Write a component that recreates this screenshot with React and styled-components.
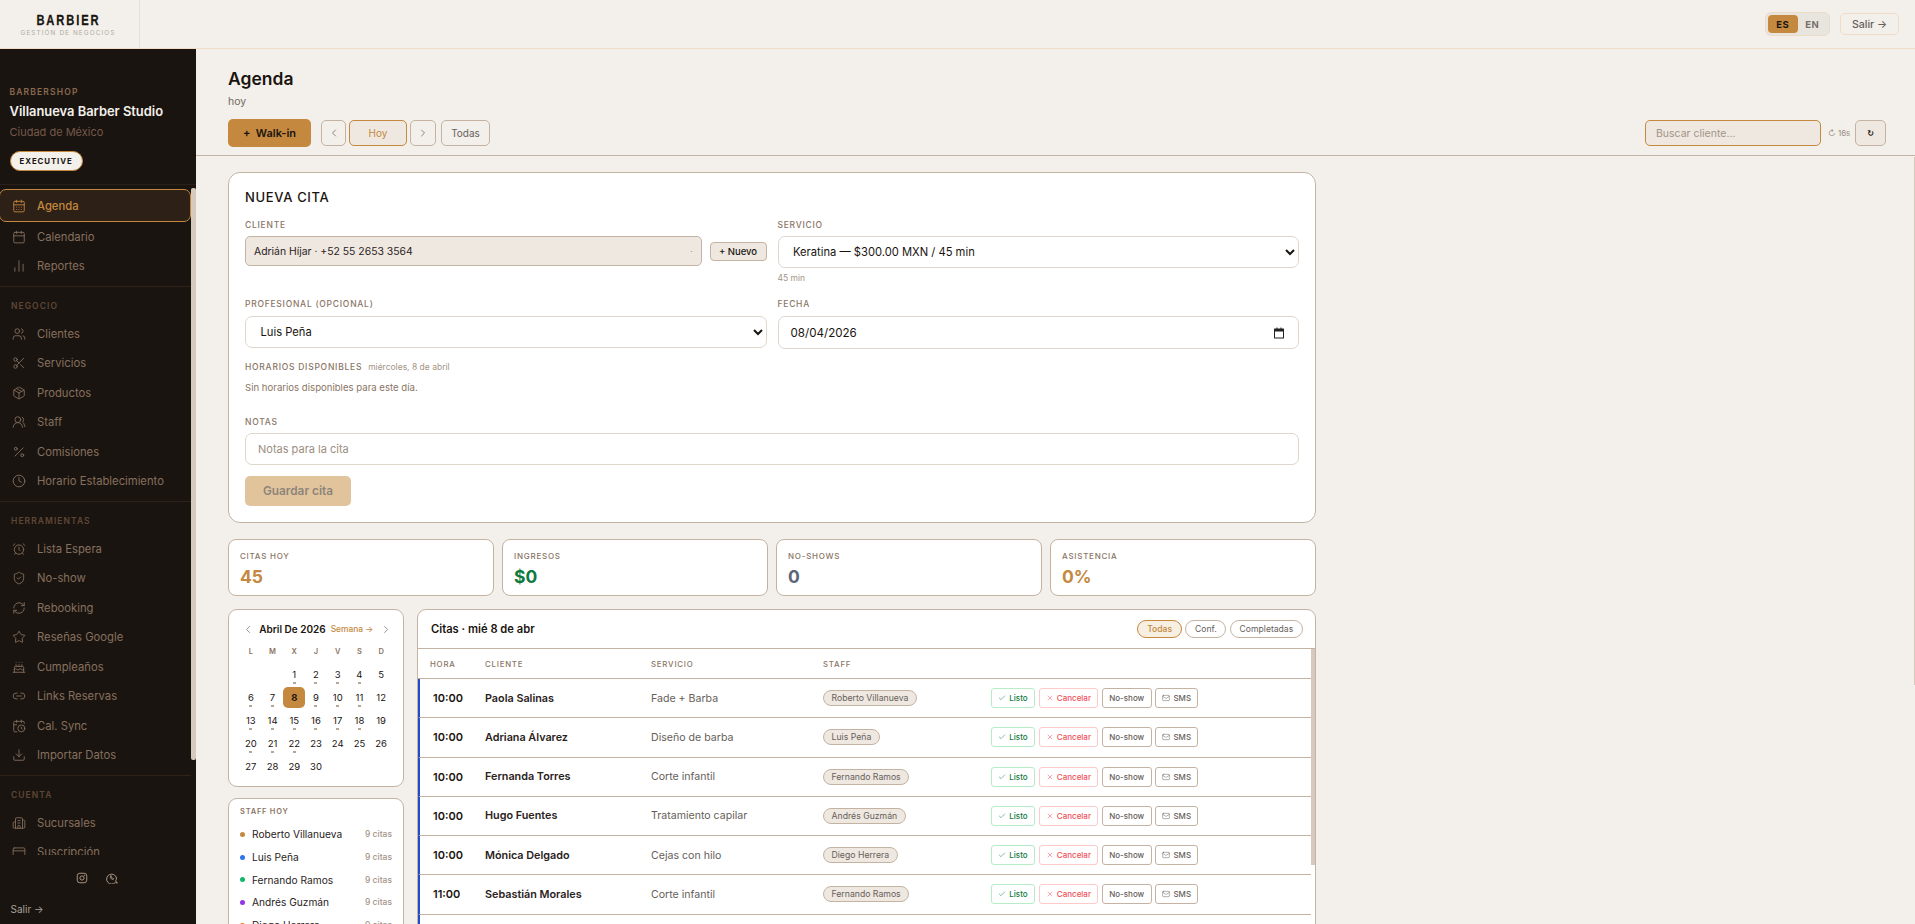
import styled, { createGlobalStyle } from "styled-components";
import {
  AlarmClock, Building2, Cake, CalendarClock, CalendarDays, Calendar, ChartNoAxesColumn, Check,
  ChevronLeft, ChevronRight, Clock, CreditCard, Download, Link2, Mail, Package, Percent,
  RefreshCw, Scissors, ShieldCheck, Star, Users, UsersRound, X,
} from "lucide-react";

const gold = "#c4883f";
const line = "#c4b3a3";
const soft = "#efe8e1";
const ink = "#1a1410";
const muted = "#8a7565";

const GlobalStyle = createGlobalStyle`
  html, body { margin: 0; padding: 0; height: 100%; overflow: hidden; }
  body { background: #f3f0eb; font-family: Inter, "Liberation Sans", sans-serif; color: ${ink}; }
  * { box-sizing: border-box; }
`;

const Page = styled.div`
  height: 100vh;
  display: flex;
  flex-direction: column;
  overflow: hidden;
`;

const TopBar = styled.header`
  height: 49px;
  flex: none;
  display: flex;
  align-items: center;
  justify-content: space-between;
  border-bottom: 1px solid #f0dcc4;
  padding-right: 16px;
`;

const LogoBlock = styled.div`
  width: 140px;
  height: 48px;
  padding-right: 3px;
  border-right: 1px solid #e8dfd5;
  display: flex;
  flex-direction: column;
  align-items: center;
  justify-content: center;
`;

const LogoName = styled.div`
  font-family: "Liberation Sans", sans-serif;
  font-weight: 700;
  font-size: 15.5px;
  line-height: 16px;
  letter-spacing: 2.6px;
  color: ${ink};
  transform: scaleX(0.72);
  -webkit-text-stroke: 0.3px ${ink};
`;

const LogoSub = styled.div`
  margin-top: 1px;
  font-size: 6.4px;
  line-height: 8px;
  letter-spacing: 1.1px;
  color: #b0aaa2;
`;

const TopActions = styled.div`
  display: flex;
  align-items: center;
  gap: 10px;
`;

const LangSwitch = styled.div`
  display: flex;
  width: 65px;
  height: 24px;
  padding: 2px;
  background: #e8e4de;
  border: 1px solid #eddcc8;
  border-radius: 6px;
`;

const LangOption = styled.span`
  flex: 1;
  display: flex;
  align-items: center;
  justify-content: center;
  font-size: 9.5px;
  font-weight: 700;
  letter-spacing: 0.4px;
  border-radius: 4px;
  background: ${(p) => (p.$active ? gold : "transparent")};
  color: ${(p) => (p.$active ? ink : "#77706a")};
`;

const ExitButton = styled.button`
  width: 59px;
  height: 22px;
  background: transparent;
  border: 1px solid #f0dcc4;
  border-radius: 5px;
  font: 500 10.6px Inter, sans-serif;
  color: #66605a;
  padding: 0;
`;

const Body = styled.div`
  flex: 1;
  display: flex;
  min-height: 0;
`;

const Sidebar = styled.aside`
  width: 196px;
  flex: none;
  background: ${ink};
  display: flex;
  flex-direction: column;
`;

const Shop = styled.div`
  padding: 37px 9.5px 13px;
  border-bottom: 1px solid #2b2018;
`;

const ShopKicker = styled.div`
  font-size: 8.5px;
  line-height: 12px;
  font-weight: 600;
  letter-spacing: 1.15px;
  color: #8a6a50;
`;

const ShopName = styled.div`
  margin-top: 5px;
  font-size: 12.9px;
  line-height: 18px;
  font-weight: 600;
  color: #f3f0eb;
`;

const ShopCity = styled.div`
  margin-top: 4px;
  font-size: 11px;
  line-height: 15px;
  color: #75594a;
`;

const PlanBadge = styled.span`
  display: inline-flex;
  align-items: center;
  margin-top: 11px;
  height: 20px;
  padding: 0 9px;
  background: #f3f0eb;
  border: 1px solid ${gold};
  border-radius: 10px;
  font-size: 7.8px;
  font-weight: 700;
  letter-spacing: 0.95px;
  color: ${ink};
`;

const NavWrap = styled.div`
  position: relative;
  flex: 1;
  min-height: 0;
`;

const Nav = styled.nav`
  height: 100%;
  overflow: hidden;
  padding: 4px 5px 0 0;
`;

const SideThumb = styled.div`
  position: absolute;
  top: 3px;
  right: 0.5px;
  width: 4.5px;
  height: 572px;
  background: #d6cabd;
  border-radius: 2px;
`;

const NavItem = styled.a`
  display: flex;
  align-items: center;
  gap: 11px;
  height: ${(p) => (p.$active ? "33px" : "29.5px")};
  margin-left: ${(p) => (p.$active ? "-1px" : "0")};
  padding-left: 12px;
  font-size: 11.25px;
  font-weight: ${(p) => (p.$active ? 500 : 400)};
  color: ${(p) => (p.$active ? gold : "#86705e")};
  background: ${(p) => (p.$active ? "#2d2016" : "transparent")};
  border: ${(p) => (p.$active ? `1px solid ${gold}` : "none")};
  border-radius: ${(p) => (p.$active ? "7px" : "0")};
  svg { flex: none; }
`;

const NavGroup = styled.div`
  padding-bottom: 4.5px;
  border-bottom: 1px solid #2f2218;
`;

const NavTitle = styled.div`
  padding: 13px 11px 7.5px;
  font-size: 8.5px;
  line-height: 12px;
  font-weight: 600;
  letter-spacing: 1.05px;
  color: #5e4636;
`;

const SideFoot = styled.div`
  height: 69px;
  flex: none;
  padding: 17px 10.5px 0;
  background: ${ink};
`;

const SocialRow = styled.div`
  display: flex;
  justify-content: center;
  gap: 18px;
  color: #a8937f;
  padding-right: 2px;
`;

const SideExit = styled.div`
  margin-top: 18px;
  font-size: 10px;
  line-height: 14px;
  color: #a8a29a;
`;

const Main = styled.main`
  position: relative;
  flex: 1;
  min-width: 0;
  overflow: hidden;
`;

const MainThumb = styled.div`
  position: absolute;
  top: 108px;
  right: 0;
  width: 1px;
  height: 528px;
  background: #d6cabd;
`;

const MainHead = styled.div`
  height: 107px;
  padding: 18px 29px 0 32px;
  border-bottom: 1px solid ${line};
`;

const Title = styled.h1`
  margin: 0;
  font-size: 17.5px;
  line-height: 24px;
  font-weight: 600;
  color: ${ink};
`;

const Sub = styled.div`
  margin-top: 4px;
  font-size: 10.5px;
  line-height: 14px;
  color: #6f6860;
`;

const Toolbar = styled.div`
  margin-top: 10px;
  display: flex;
  align-items: center;
`;

const WalkIn = styled.button`
  width: 83px;
  height: 28px;
  margin-right: 10px;
  padding: 0;
  background: ${gold};
  border: none;
  border-radius: 5px;
  font: 600 11px Inter, sans-serif;
  color: ${ink};
`;

const ToolButton = styled.button`
  width: ${(p) => p.$w}px;
  height: 26px;
  margin-right: ${(p) => p.$mr || 3}px;
  padding: 0;
  display: flex;
  align-items: center;
  justify-content: center;
  background: ${(p) => (p.$active ? soft : "transparent")};
  border: 1px solid ${(p) => (p.$active ? gold : line)};
  border-radius: 5px;
  font: 400 10px Inter, sans-serif;
  color: ${(p) => (p.$active ? gold : "#66605a")};
`;

const Push = styled.div`
  flex: 1;
`;

const SearchBox = styled.input`
  width: 176px;
  height: 26px;
  padding: 0 10px;
  background: ${soft};
  border: 1px solid ${gold};
  border-radius: 5px;
  font: 400 10.5px Inter, sans-serif;
  outline: none;
  &::placeholder { color: #a39487; }
`;

const Timer = styled.span`
  margin: 0 6px 0 7px;
  width: 21px;
  font-size: 8px;
  white-space: nowrap;
  color: #9b8d80;
`;

const RefreshButton = styled.button`
  width: 31px;
  height: 26px;
  padding: 0;
  background: ${soft};
  border: 1px solid ${line};
  border-radius: 5px;
  font: 700 8px "DejaVu Sans", sans-serif;
  color: ${ink};
`;

const Content = styled.div`
  width: 1088px;
  margin: 16px 0 0 32px;
`;

const FormCard = styled.section`
  height: 351px;
  padding: 15px 16px 16px;
  background: #fff;
  border: 1px solid ${line};
  border-radius: 12px;
`;

const FormTitle = styled.h2`
  margin: 0;
  font-size: 13px;
  line-height: 18px;
  font-weight: 500;
  letter-spacing: 0.65px;
`;

const FormGrid = styled.div`
  margin-top: ${(p) => p.$top}px;
  display: grid;
  grid-template-columns: 1fr 1fr;
  column-gap: 11px;
`;

const Field = styled.div`
  min-height: ${(p) => p.$min || 0}px;
`;

const FieldLabel = styled.div`
  font-size: 8.5px;
  line-height: 12px;
  margin-bottom: ${(p) => p.$gap || 5}px;
  font-weight: 500;
  letter-spacing: 0.75px;
  color: ${muted};
`;

const ClientRow = styled.div`
  display: flex;
  align-items: center;
  gap: 8px;
`;

const ClientBox = styled.div`
  flex: 1;
  height: 30px;
  display: flex;
  align-items: center;
  justify-content: space-between;
  padding: 0 8px;
  background: ${soft};
  border: 1px solid ${line};
  border-radius: 5px;
  font-size: 10.4px;
  color: #2a221c;
`;

const TinyMark = styled.span`
  font-size: 8px;
  color: #8d8378;
`;

const NewButton = styled.button`
  width: 57px;
  height: 19px;
  padding: 0;
  background: ${soft};
  border: 1px solid ${line};
  border-radius: 4px;
  font: 500 9.5px Inter, sans-serif;
  color: ${ink};
`;

const Select = styled.select`
  width: 100%;
  height: 32px;
  padding: 0 10.5px;
  background: #fff;
  border: 1px solid #e0d6ca;
  border-radius: 7px;
  font: 400 11.2px Inter, sans-serif;
  color: ${ink};
  outline: none;
`;

const Hint = styled.div`
  margin-top: 4px;
  font-size: 8.5px;
  line-height: 12px;
  color: #a39487;
`;

const DateBox = styled.div`
  height: 33px;
  padding: 0 13px 0 12px;
  display: flex;
  align-items: center;
  justify-content: space-between;
  border: 1px solid #e0d6ca;
  border-radius: 7px;
  font-size: 11.6px;
  color: ${ink};
`;

const SlotsHead = styled.div`
  margin-top: 12px;
  display: flex;
  align-items: baseline;
  gap: 6px;
  line-height: 12px;
`;

const SlotsLabel = styled.span`
  font-size: 8.5px;
  font-weight: 500;
  letter-spacing: 0.75px;
  color: ${muted};
`;

const SlotsDate = styled.span`
  font-size: 8.5px;
  color: #a39487;
`;

const SlotsEmpty = styled.div`
  margin-top: 8px;
  font-size: 9.6px;
  line-height: 14px;
  color: ${muted};
`;

const NotesField = styled.div`
  margin-top: 21px;
`;

const NotesInput = styled.input`
  width: 100%;
  height: 32px;
  padding: 0 12px;
  border: 1px solid #e0d6ca;
  border-radius: 7px;
  font: 400 11px Inter, sans-serif;
  outline: none;
  &::placeholder { color: #9b8d80; }
`;

const SaveButton = styled.button`
  display: block;
  width: 106px;
  height: 30px;
  margin-top: 11px;
  padding: 0;
  background: #e2c49c;
  border: none;
  border-radius: 5px;
  font: 600 11.8px Inter, sans-serif;
  color: #8d857b;
`;

const StatGrid = styled.div`
  margin-top: 16px;
  display: grid;
  grid-template-columns: repeat(4, 1fr);
  gap: 8px;
`;

const StatCard = styled.div`
  height: 57px;
  padding: 10px 11px;
  background: #fff;
  border: 1px solid ${line};
  border-radius: 8px;
`;

const StatLabel = styled.div`
  font-size: 8px;
  line-height: 12px;
  font-weight: 500;
  letter-spacing: 0.75px;
  color: ${muted};
`;

const StatValue = styled.div`
  margin-top: 4px;
  font-size: 17.5px;
  line-height: 22px;
  font-weight: 700;
  color: ${(p) => p.$color};
`;

const Lower = styled.div`
  margin-top: 13px;
  display: grid;
  grid-template-columns: 176px 1fr;
  column-gap: 13px;
  align-items: start;
`;

const LeftColumn = styled.div`
  display: flex;
  flex-direction: column;
  gap: 11px;
`;

const CalendarCard = styled.div`
  height: 178px;
  padding: 11px 11px 0;
  background: #fff;
  border: 1px solid ${line};
  border-radius: 9px;
`;

const CalHead = styled.div`
  height: 16px;
  display: flex;
  align-items: center;
  padding: 0 0 0 2px;
  color: #7d7268;
`;

const CalTitle = styled.span`
  margin-left: 5px;
  font-size: 10px;
  font-weight: 600;
  color: ${ink};
  white-space: nowrap;
`;

const CalLink = styled.span`
  margin: 0 6.5px 0 5px;
  font-size: 8.4px;
  font-weight: 500;
  color: ${gold};
  white-space: nowrap;
`;

const WeekRow = styled.div`
  margin-top: 9px;
  display: grid;
  grid-template-columns: repeat(7, 1fr);
  text-align: center;
  font-size: 7.5px;
  line-height: 12px;
  font-weight: 600;
  color: ${muted};
`;

const DayGrid = styled.div`
  margin-top: 6px;
  display: grid;
  grid-template-columns: repeat(7, 1fr);
  grid-auto-rows: 21px;
  row-gap: 2.05px;
`;

const Day = styled.div`
  position: relative;
  display: flex;
  align-items: center;
  justify-content: center;
  font-size: 9.5px;
  font-weight: ${(p) => (p.$today ? 700 : 400)};
  color: ${ink};
  background: ${(p) => (p.$today ? gold : "transparent")};
  border-radius: 5px;
  ${(p) =>
    p.$dot &&
    `&::after {
      content: "";
      position: absolute;
      left: 50%;
      bottom: 1px;
      width: 3px;
      height: 2px;
      margin-left: -1.5px;
      background: #b5a697;
    }`}
`;

const StaffCard = styled.div`
  padding: 7px 11px 12px;
  background: #fff;
  border: 1px solid ${line};
  border-radius: 9px;
`;

const StaffTitle = styled.div`
  margin-bottom: 5px;
  font-size: 7.5px;
  line-height: 12px;
  font-weight: 600;
  letter-spacing: 0.75px;
  color: ${muted};
`;

const StaffRow = styled.div`
  height: 22.7px;
  display: flex;
  align-items: center;
`;

const StaffDot = styled.span`
  width: 5px;
  height: 5px;
  margin-right: 7px;
  border-radius: 50%;
  background: ${(p) => p.$color};
`;

const StaffName = styled.span`
  flex: 1;
  font-size: 10.2px;
  color: #2a221c;
`;

const StaffCount = styled.span`
  font-size: 8.5px;
  font-weight: 500;
  color: #a39487;
`;

const ApptPanel = styled.section`
  background: #fff;
  border: 1px solid ${line};
  border-radius: 9px 9px 0 0;
  overflow: hidden;
`;

const PanelHead = styled.div`
  height: 39px;
  display: flex;
  align-items: center;
  justify-content: space-between;
  padding: 0 12px 0 13px;
  border-bottom: 1px solid ${line};
`;

const PanelTitle = styled.div`
  font-size: 11.2px;
  font-weight: 600;
  color: ${ink};
`;

const Pills = styled.div`
  display: flex;
  gap: 3.3px;
`;

const Pill = styled.span`
  height: 18px;
  padding: 0 8.8px;
  display: flex;
  align-items: center;
  border-radius: 9px;
  border: 1px solid ${(p) => (p.$active ? gold : line)};
  background: ${(p) => (p.$active ? "#f8efe3" : "transparent")};
  font-size: 8.6px;
  font-weight: ${(p) => (p.$active ? 500 : 400)};
  color: ${(p) => (p.$active ? gold : "#66605a")};
`;

const TableArea = styled.div`
  position: relative;
  height: 620px;
  overflow: hidden;
  padding-right: 4px;
`;

const TableThumb = styled.div`
  position: absolute;
  top: 0;
  right: 0;
  width: 4px;
  height: 216px;
  background: #d6cabd;
`;

const HeadRow = styled.div`
  height: 30px;
  padding-left: 12px;
  display: grid;
  grid-template-columns: 55px 166px 172px 1fr;
  align-items: center;
  border-bottom: 1px solid ${line};
  font-size: 7.8px;
  font-weight: 500;
  letter-spacing: 0.8px;
  color: ${muted};
`;

const ApptRow = styled.div`
  height: 39.25px;
  padding-left: 13px;
  display: grid;
  grid-template-columns: 52px 166px 172px 168px 1fr;
  align-items: center;
  border-left: 2px solid #1a4fd0;
  border-bottom: 1px solid ${line};
`;

const Time = styled.span`
  font-size: 11px;
  font-weight: 600;
  color: ${ink};
`;

const Client = styled.span`
  font-size: 10.8px;
  font-weight: 600;
  color: #2a221c;
`;

const Service = styled.span`
  font-size: 10.6px;
  color: #66605a;
`;

const StaffPill = styled.span`
  justify-self: start;
  height: 16px;
  padding: 0 7.5px;
  display: flex;
  align-items: center;
  background: ${soft};
  border: 1px solid ${line};
  border-radius: 8px;
  font-size: 8.7px;
  color: #66605a;
`;

const Actions = styled.div`
  display: flex;
  gap: 3.6px;
`;

const tones = {
  ok: { border: "#b7ecc9", color: "#0f7a3e" },
  no: { border: "#ffcaca", color: "#f0505a" },
  plain: { border: line, color: "#66605a" },
};

const ActionButton = styled.button`
  height: 20px;
  padding: 0 6.3px;
  display: flex;
  align-items: center;
  gap: 3px;
  background: #fff;
  border: 1px solid ${(p) => tones[p.$tone].border};
  border-radius: 3px;
  font: 500 8px Inter, sans-serif;
  color: ${(p) => tones[p.$tone].color};
`;

const InstagramGlyph = () => (
  <svg width="12" height="12" viewBox="0 0 24 24" fill="none" stroke="currentColor" strokeWidth="2">
    <rect x="2.5" y="2.5" width="19" height="19" rx="5" />
    <circle cx="12" cy="12" r="4.2" />
    <circle cx="17.3" cy="6.7" r="0.6" fill="currentColor" />
  </svg>
);

const WhatsappGlyph = () => (
  <svg width="12" height="12" viewBox="0 0 24 24" fill="none" stroke="currentColor" strokeWidth="2" strokeLinecap="round" strokeLinejoin="round">
    <path d="M22 22l-3.2-1.2A10 10 0 1 1 21 12c0 2-.5 3.6-1.4 5z" />
    <path d="M9 8.500c-.8.8-.6 2.400.8 4.200s3.200 2.800 4.600 2.200l1.200-1.400-2.200-1.400-1 .8c-.8-.4-1.600-1.200-2-2.200l.8-1-1.200-2.200z" />
  </svg>
);

const navGroups = [
  { title: "NEGOCIO", items: [
    [Users, "Clientes"], [Scissors, "Servicios"], [Package, "Productos"],
    [UsersRound, "Staff"], [Percent, "Comisiones"], [Clock, "Horario Establecimiento"],
  ] },
  { title: "HERRAMIENTAS", items: [
    [AlarmClock, "Lista Espera"], [ShieldCheck, "No-show"], [RefreshCw, "Rebooking"],
    [Star, "Reseñas Google"], [Cake, "Cumpleaños"], [Link2, "Links Reservas"],
    [CalendarClock, "Cal. Sync"], [Download, "Importar Datos"],
  ] },
  { title: "CUENTA", items: [
    [Building2, "Sucursales"], [CreditCard, "Suscripción"],
  ] },
];

const stats = [
  ["CITAS HOY", "45", gold],
  ["INGRESOS", "$0", "#0f7a3e"],
  ["NO-SHOWS", "0", "#5c6478"],
  ["ASISTENCIA", "0%", gold],
];

const dotted = [1, 2, 3, 4, 6, 7, 9, 10, 11, 13, 14, 15, 16, 17, 18, 20, 21, 22];

const staff = [
  ["Roberto Villanueva", "#c4883f"],
  ["Luis Peña", "#2f74ee"],
  ["Fernando Ramos", "#12b76a"],
  ["Andrés Guzmán", "#9333ea"],
  ["Diego Herrera", "#f97316"],
];

const shownRows = [
  ["10:00", "Paola Salinas", "Fade + Barba", "Roberto Villanueva"],
  ["10:00", "Adriana Álvarez", "Diseño de barba", "Luis Peña"],
  ["10:00", "Fernanda Torres", "Corte infantil", "Fernando Ramos"],
  ["10:00", "Hugo Fuentes", "Tratamiento capilar", "Andrés Guzmán"],
  ["10:00", "Mónica Delgado", "Cejas con hilo", "Diego Herrera"],
  ["11:00", "Sebastián Morales", "Corte infantil", "Fernando Ramos"],
];

// 45 citas in the list, the visible six repeat below the fold
const rows = Array.from({ length: 45 }, (_, i) => shownRows[i % shownRows.length]);

function SideBar() {
  return (
    <Sidebar>
      <Shop>
        <ShopKicker>BARBERSHOP</ShopKicker>
        <ShopName>Villanueva Barber Studio</ShopName>
        <ShopCity>Ciudad de México</ShopCity>
        <PlanBadge>EXECUTIVE</PlanBadge>
      </Shop>
      <NavWrap>
        <Nav>
          <NavGroup>
            <NavItem $active><CalendarDays size={14} strokeWidth={1.5} />Agenda</NavItem>
            <NavItem><Calendar size={14} strokeWidth={1.5} />Calendario</NavItem>
            <NavItem><ChartNoAxesColumn size={14} strokeWidth={1.5} />Reportes</NavItem>
          </NavGroup>
          {navGroups.map((group) => (
            <NavGroup key={group.title}>
              <NavTitle>{group.title}</NavTitle>
              {group.items.map(([Icon, label]) => (
                <NavItem key={label}><Icon size={14} strokeWidth={1.5} />{label}</NavItem>
              ))}
            </NavGroup>
          ))}
        </Nav>
        <SideThumb />
      </NavWrap>
      <SideFoot>
        <SocialRow>
          <InstagramGlyph />
          <WhatsappGlyph />
        </SocialRow>
        <SideExit>Salir →</SideExit>
      </SideFoot>
    </Sidebar>
  );
}

function NewAppointment() {
  return (
    <FormCard>
      <FormTitle>NUEVA CITA</FormTitle>
      <FormGrid $top={13}>
        <Field $min={62}>
          <FieldLabel>CLIENTE</FieldLabel>
          <ClientRow>
            <ClientBox>Adrián Híjar · +52 55 2653 3564<TinyMark>·</TinyMark></ClientBox>
            <NewButton>+ Nuevo</NewButton>
          </ClientRow>
        </Field>
        <Field>
          <FieldLabel>SERVICIO</FieldLabel>
          <Select defaultValue="k"><option value="k">Keratina — $300.00 MXN / 45 min</option></Select>
          <Hint>45 min</Hint>
        </Field>
      </FormGrid>
      <FormGrid $top={14}>
        <Field>
          <FieldLabel $gap={6}>PROFESIONAL (OPCIONAL)</FieldLabel>
          <Select defaultValue="l"><option value="l">Luis Peña</option></Select>
        </Field>
        <Field>
          <FieldLabel $gap={6}>FECHA</FieldLabel>
          <DateBox>
            08/04/2026
            <svg width="12" height="12" viewBox="0 0 12 12" fill="#222">
              <path d="M1.5 1.500h2V.5h1v1h3V.5h1v1h2a.5.5 0 0 1 .5.5v9a.5.5 0 0 1-.5.5h-9A.5.5 0 0 1 1 11V2a.5.5 0 0 1 .5-.5zM2 4.500V10.500h8V4.500z" />
            </svg>
          </DateBox>
        </Field>
      </FormGrid>
      <SlotsHead>
        <SlotsLabel>HORARIOS DISPONIBLES</SlotsLabel>
        <SlotsDate>miércoles, 8 de abril</SlotsDate>
      </SlotsHead>
      <SlotsEmpty>Sin horarios disponibles para este día.</SlotsEmpty>
      <NotesField>
        <FieldLabel>NOTAS</FieldLabel>
        <NotesInput placeholder="Notas para la cita" />
      </NotesField>
      <SaveButton>Guardar cita</SaveButton>
    </FormCard>
  );
}

function MonthCalendar() {
  const blanks = [0, 1];
  const days = Array.from({ length: 30 }, (_, i) => i + 1);
  return (
    <CalendarCard>
      <CalHead>
        <ChevronLeft size={13} strokeWidth={1.5} />
        <CalTitle>Abril De 2026</CalTitle>
        <CalLink>Semana →</CalLink>
        <ChevronRight size={13} strokeWidth={1.5} />
      </CalHead>
      <WeekRow>
        {["L", "M", "X", "J", "V", "S", "D"].map((d) => <span key={d}>{d}</span>)}
      </WeekRow>
      <DayGrid>
        {blanks.map((b) => <span key={b} />)}
        {days.map((d) => (
          <Day key={d} $today={d === 8} $dot={dotted.includes(d)}>{d}</Day>
        ))}
      </DayGrid>
    </CalendarCard>
  );
}

function Appointments() {
  return (
    <ApptPanel>
      <PanelHead>
        <PanelTitle>Citas · mié 8 de abr</PanelTitle>
        <Pills>
          <Pill $active>Todas</Pill>
          <Pill>Conf.</Pill>
          <Pill>Completadas</Pill>
        </Pills>
      </PanelHead>
      <TableArea>
        <HeadRow>
          <span>HORA</span>
          <span>CLIENTE</span>
          <span>SERVICIO</span>
          <span>STAFF</span>
        </HeadRow>
        {rows.map(([time, client, service, who], i) => (
          <ApptRow key={i}>
            <Time>{time}</Time>
            <Client>{client}</Client>
            <Service>{service}</Service>
            <StaffPill>{who}</StaffPill>
            <Actions>
              <ActionButton $tone="ok"><Check size={8} strokeWidth={1.5} />Listo</ActionButton>
              <ActionButton $tone="no"><X size={8} strokeWidth={1.5} />Cancelar</ActionButton>
              <ActionButton $tone="plain">No-show</ActionButton>
              <ActionButton $tone="plain"><Mail size={8} strokeWidth={1.5} />SMS</ActionButton>
            </Actions>
          </ApptRow>
        ))}
        <TableThumb />
      </TableArea>
    </ApptPanel>
  );
}

export default function App() {
  return (
    <Page>
      <GlobalStyle />
      <TopBar>
        <LogoBlock>
          <LogoName>BARBIER</LogoName>
          <LogoSub>GESTIÓN DE NEGOCIOS</LogoSub>
        </LogoBlock>
        <TopActions>
          <LangSwitch>
            <LangOption $active>ES</LangOption>
            <LangOption>EN</LangOption>
          </LangSwitch>
          <ExitButton>Salir →</ExitButton>
        </TopActions>
      </TopBar>
      <Body>
        <SideBar />
        <Main>
          <MainHead>
            <Title>Agenda</Title>
            <Sub>hoy</Sub>
            <Toolbar>
              <WalkIn>+&nbsp; Walk-in</WalkIn>
              <ToolButton $w={25}><ChevronLeft size={12} strokeWidth={1.5} /></ToolButton>
              <ToolButton $w={58} $active>Hoy</ToolButton>
              <ToolButton $w={26} $mr={5}><ChevronRight size={12} strokeWidth={1.5} /></ToolButton>
              <ToolButton $w={49}>Todas</ToolButton>
              <Push />
              <SearchBox placeholder="Buscar cliente..." />
              <Timer>↻ 16s</Timer>
              <RefreshButton>↻</RefreshButton>
            </Toolbar>
          </MainHead>
          <Content>
            <NewAppointment />
            <StatGrid>
              {stats.map(([label, value, color]) => (
                <StatCard key={label}>
                  <StatLabel>{label}</StatLabel>
                  <StatValue $color={color}>{value}</StatValue>
                </StatCard>
              ))}
            </StatGrid>
            <Lower>
              <LeftColumn>
                <MonthCalendar />
                <StaffCard>
                  <StaffTitle>STAFF HOY</StaffTitle>
                  {staff.map(([name, color]) => (
                    <StaffRow key={name}>
                      <StaffDot $color={color} />
                      <StaffName>{name}</StaffName>
                      <StaffCount>9 citas</StaffCount>
                    </StaffRow>
                  ))}
                </StaffCard>
              </LeftColumn>
              <Appointments />
            </Lower>
          </Content>
          <MainThumb />
        </Main>
      </Body>
    </Page>
  );
}
